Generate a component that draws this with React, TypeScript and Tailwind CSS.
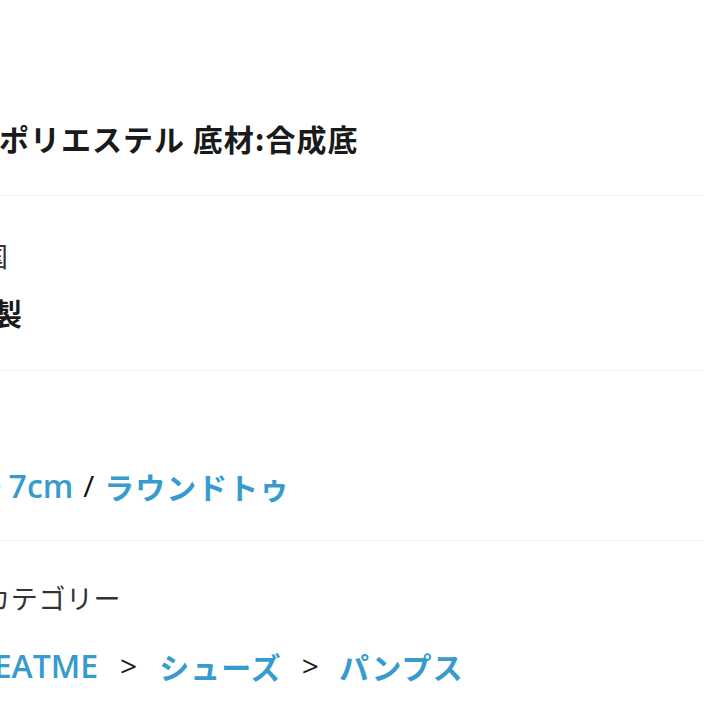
export default function App() {
  const font = { fontFamily: '"Noto Sans CJK JP", "Noto Sans", sans-serif' };
  const latin = { fontFamily: '"Open Sans", "Noto Sans CJK JP", sans-serif' };
  return (
    <div className="w-[704px] h-[704px] overflow-hidden bg-white text-[#222]" style={font}>
      <div className="h-[195px] flex items-end pb-[42px] overflow-hidden whitespace-nowrap">
        <div className="-ml-[1px] text-[30px] tracking-[1px] font-bold leading-none text-[#1a1a1a]">ポリエステル 底材:合成底</div>
      </div>
      <div className="h-px bg-[#f0f0f0]" />
      <div className="h-[174px] flex flex-col overflow-hidden whitespace-nowrap">
        <div className="mt-[46px] -ml-[75px] text-[27px] tracking-[1px] leading-none text-[#333]">原産国</div>
        <div className="mt-[28px] -ml-[70px] text-[30px] tracking-[1px] font-bold leading-none text-[#1a1a1a]">中国製</div>
      </div>
      <div className="h-px bg-[#f0f0f0]" />
      <div className="h-[169px] flex flex-col overflow-hidden whitespace-nowrap">
        <div className="mt-[99px] -ml-[35px] leading-none flex items-center">
          <span className="text-[32px] text-[#389bce] font-semibold mr-[7px]" style={latin}>5~</span>
          <span className="text-[32px] text-[#389bce] font-semibold" style={latin}>7cm</span>
          <span className="text-[30px] mx-[10px] text-[#111] font-medium" style={latin}>/</span>
          <span className="text-[30px] text-[#389bce] font-bold tracking-[1px]">ラウンドトゥ</span>
        </div>
      </div>
      <div className="h-px bg-[#f0f0f0]" />
      <div className="flex flex-col overflow-hidden whitespace-nowrap">
        <div className="mt-[43px] -ml-[72px] text-[27px] tracking-[0.6px] leading-none text-[#333]">商品カテゴリー</div>
        <div className="mt-[39px] -ml-[50px] leading-none flex items-center">
          <span className="text-[32px] text-[#389bce] font-semibold" style={latin}>GREATME</span>
          <span className="text-[30px] mx-[22px] text-[#1a1a1a] font-normal" style={latin}>&gt;</span>
          <span className="text-[30px] text-[#389bce] font-bold tracking-[1px]">シューズ</span>
          <span className="text-[30px] mx-[20px] text-[#1a1a1a] font-normal" style={latin}>&gt;</span>
          <span className="text-[30px] text-[#389bce] font-bold tracking-[1px]">パンプス</span>
        </div>
      </div>
    </div>
  );
}
